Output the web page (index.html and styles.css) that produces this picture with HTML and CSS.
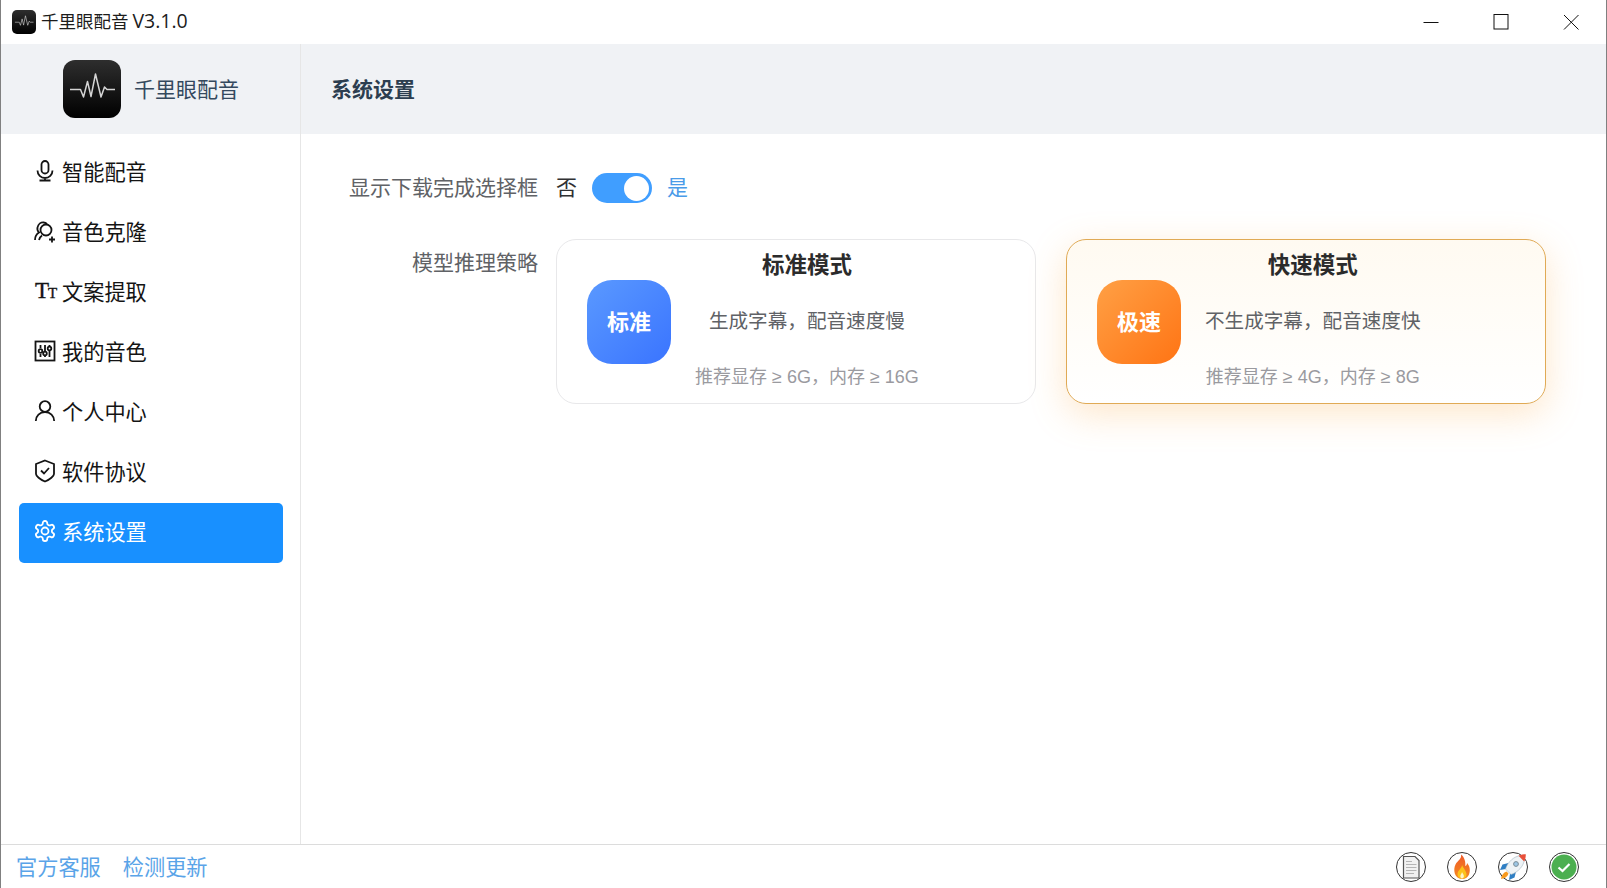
FILE: index.html
```html
<!DOCTYPE html>
<html lang="zh-CN">
<head>
<meta charset="utf-8">
<title>千里眼配音</title>
<link rel="stylesheet" href="styles.css">
</head>
<body>
<svg class="defs" width="0" height="0" aria-hidden="true">
  <defs>
    <linearGradient id="logoBg" x1="0" y1="0" x2="0" y2="1">
      <stop offset="0" stop-color="#2e2e2e"/><stop offset="1" stop-color="#000"/>
    </linearGradient>
    <linearGradient id="fireOut" x1="0" y1="0" x2="0" y2="1">
      <stop offset="0" stop-color="#ee5a2a"/><stop offset="1" stop-color="#f58a1f"/>
    </linearGradient>
    <symbol id="logo" viewBox="0 0 58 58">
      <rect width="58" height="58" rx="12" fill="url(#logoBg)"/>
      <path d="M7 29.500H15L17.500 29.500L20.500 37L24.500 21.500L28 36.500L32.500 14L38 37L41.500 27L44 29.500H52" fill="none" stroke="#d4d4d4" stroke-width="1.500" stroke-linejoin="round"/>
    </symbol>
  </defs>
</svg>
<div class="window">
  <header class="titlebar">
    <svg class="title-logo"><use href="#logo"/></svg>
    <span class="title-text">千里眼配音 <span class="title-ver">V3.1.0</span></span>
    <div class="win-controls">
      <svg class="win-btn" viewBox="0 0 16 16"><path d="M0.500 8.500H15.500" stroke="#111" fill="none"/></svg>
      <svg class="win-btn" viewBox="0 0 16 16"><rect x="1" y="0.500" width="14" height="14.500" fill="none" stroke="#111"/></svg>
      <svg class="win-btn" viewBox="0 0 16 16"><path d="M1 1L15.500 15.500M15.500 1L1 15.500" stroke="#111" fill="none"/></svg>
    </div>
  </header>

  <div class="top">
    <div class="brand">
      <svg class="brand-logo"><use href="#logo"/></svg>
      <span class="brand-name">千里眼配音</span>
    </div>
    <h1 class="page-title">系统设置</h1>
  </div>

  <div class="main">
    <nav class="sidebar">
      <a class="nav-item">
        <svg class="nav-icon" viewBox="0 0 24 24"><rect x="8.500" y="2" width="7" height="12.500" rx="3.500"/><path d="M4.500 11.500a7.500 7.500 0 0 0 15 0M12 19v2.500M6.500 21.500h11"/></svg>
        <span>智能配音</span>
      </a>
      <a class="nav-item">
        <svg class="nav-icon" viewBox="0 0 24 24"><path d="M2 21c0-3.500 1.500-6 4-7.500C4.500 12 4 10.500 4.500 8.500 5.300 5.200 8 3 11 3.500c1.500.2 2.500 1 3 2"/><circle cx="13" cy="11" r="5.500"/><path d="M9 16.500c-1.500 1-2.500 2.500-3 4.500M19 17.500v6M16 20.500h6"/></svg>
        <span>音色克隆</span>
      </a>
      <a class="nav-item">
        <span class="tt-icon"><span class="tt-big">T</span><span class="tt-small">T</span></span>
        <span>文案提取</span>
      </a>
      <a class="nav-item">
        <svg class="nav-icon" viewBox="0 0 24 24"><rect x="2.500" y="2.500" width="19" height="19" stroke-width="1.800"/><path d="M7.500 6v3M7.500 15v3M12 6v6M12 17v1M16.500 6v1M16.500 12v6"/><circle cx="7.500" cy="12" r="1.800"/><circle cx="12" cy="14.500" r="1.800"/><circle cx="16.500" cy="9.500" r="1.800"/></svg>
        <span>我的音色</span>
      </a>
      <a class="nav-item">
        <svg class="nav-icon" viewBox="0 0 24 24"><circle cx="12" cy="7.500" r="5.300"/><path d="M2.800 22c0-5 4-9 9.200-9s9.200 4 9.200 9"/></svg>
        <span>个人中心</span>
      </a>
      <a class="nav-item">
        <svg class="nav-icon" viewBox="0 0 24 24"><path d="M12 1.500L21 5v10c0 2-4 5.500-9 7.500C7 20.500 3 17 3 15V5z"/><path d="M8 11.500l3 3 5-5.500"/></svg>
        <span>软件协议</span>
      </a>
      <a class="nav-item active">
        <svg class="nav-icon" viewBox="0 0 24 24"><path d="M12.220 2h-.44a2 2 0 0 0-2 2v.18a2 2 0 0 1-1 1.730l-.43.25a2 2 0 0 1-2 0l-.15-.08a2 2 0 0 0-2.730.73l-.22.38a2 2 0 0 0 .73 2.730l.15.1a2 2 0 0 1 1 1.720v.51a2 2 0 0 1-1 1.740l-.15.09a2 2 0 0 0-.73 2.730l.22.38a2 2 0 0 0 2.730.73l.15-.08a2 2 0 0 1 2 0l.43.25a2 2 0 0 1 1 1.730V20a2 2 0 0 0 2 2h.44a2 2 0 0 0 2-2v-.18a2 2 0 0 1 1-1.730l.43-.25a2 2 0 0 1 2 0l.15.08a2 2 0 0 0 2.730-.73l.22-.39a2 2 0 0 0-.73-2.730l-.15-.08a2 2 0 0 1-1-1.740v-.5a2 2 0 0 1 1-1.740l.15-.09a2 2 0 0 0 .73-2.730l-.22-.38a2 2 0 0 0-2.730-.73l-.15.08a2 2 0 0 1-2 0l-.43-.25a2 2 0 0 1-1-1.730V4a2 2 0 0 0-2-2z"/><circle cx="12" cy="12" r="3.500"/></svg>
        <span>系统设置</span>
      </a>
    </nav>

    <section class="content">
      <div class="form">
        <div class="label label-switch">显示下载完成选择框</div>
        <div class="switch-row">
          <span class="opt opt-off">否</span>
          <span class="switch"><span class="knob"></span></span>
          <span class="opt opt-on">是</span>
        </div>
        <div class="label label-cards">模型推理策略</div>
        <div class="cards">
          <div class="card">
            <div class="badge badge-blue">标准</div>
            <div class="card-text">
              <div class="card-title">标准模式</div>
              <div class="card-desc">生成字幕，配音速度慢</div>
              <div class="card-sub">推荐显存 ≥ 6G，内存 ≥ 16G</div>
            </div>
          </div>
          <div class="card card-selected">
            <div class="badge badge-orange">极速</div>
            <div class="card-text">
              <div class="card-title">快速模式</div>
              <div class="card-desc">不生成字幕，配音速度快</div>
              <div class="card-sub">推荐显存 ≥ 4G，内存 ≥ 8G</div>
            </div>
          </div>
        </div>
      </div>
    </section>
  </div>

  <footer class="footer">
    <a class="foot-link">官方客服</a>
    <a class="foot-link">检测更新</a>
    <div class="status-icons">
      <svg class="status" viewBox="0 0 30 30">
        <circle cx="15" cy="15" r="14.500" fill="#fff" stroke="#333"/>
        <path d="M7.500 4.500H19L23 8.500V26H7.500z" fill="#f1f1f1" stroke="#555" stroke-width="1.200"/>
        <path d="M10 9.500H16M10 12.500H20.500M10 15.500H20.500M10 18.500H20.500M10 21.500H18" stroke="#b5b5b5" stroke-width="1"/>
      </svg>
      <svg class="status" viewBox="0 0 30 30">
        <circle cx="15" cy="15" r="14.500" fill="#fff" stroke="#333"/>
        <path d="M14 2.500C15 7 10.500 8.500 8.500 12.500C6 17 7 27 15 27C22.500 27 24 19 22 14C21.300 12.500 20.500 11.500 20 11C20 13 19 14 18.300 14C18.800 10 17.500 5 14 2.500z" fill="url(#fireOut)"/>
        <path d="M15 13C15 16.500 10.500 18 10.500 22.500C10.500 25 12.700 26.500 15 26.500C17.800 26.500 19.500 25 19.500 22.500C19.500 19 16.500 16.500 15 13z" fill="#fcc21b"/>
        <path d="M15 20C15 21.500 13.300 22.500 13.300 24.300C13.300 25.500 14.100 26.500 15 26.500C16 26.500 16.900 25.500 16.900 24.300C16.900 22.500 15.500 21.500 15 20z" fill="#fff3c4"/>
      </svg>
      <svg class="status" viewBox="0 0 30 30">
        <circle cx="15" cy="15" r="14.500" fill="#fff" stroke="#333"/>
        <path d="M10.500 11L4.500 12.500L2 18L8 17z" fill="#2f7fc4"/>
        <path d="M18 19.500L16.500 25.500L11 28L12 22z" fill="#2f7fc4"/>
        <path d="M8.500 19.500C5.500 20.500 3.500 23 3 27C7 26.500 9.800 24.500 10.500 21.500z" fill="#f79a1f"/>
        <path d="M7.500 17C10 9.500 16 4.500 22.500 3.500L26.500 7.500C25.500 14 20.500 20 13 22.500z" fill="#eef3f6" stroke="#9fb4c0" stroke-width=".6"/>
        <path d="M20.500 3.800C23 2.500 25.500 2.200 27.800 2.200C27.800 4.500 27.500 7 26.200 9.500z" fill="#e8503a"/>
        <circle cx="18" cy="12" r="2.400" fill="#9cc7e6" stroke="#7a8c96"/>
      </svg>
      <svg class="status" viewBox="0 0 30 30">
        <circle cx="15" cy="15" r="14.500" fill="#fff" stroke="#333"/>
        <circle cx="15" cy="15" r="12.500" fill="#4caf50"/>
        <path d="M9.500 15.500L13.500 19L20.500 12" fill="none" stroke="#fff" stroke-width="2.200"/>
      </svg>
    </div>
  </footer>
</div>
</body>
</html>
```

FILE: styles.css
```css
* { box-sizing: border-box; }
html, body { margin: 0; height: 100%; }
body {
  font-family: "Noto Sans CJK SC", "Liberation Sans", sans-serif;
  background: #fff;
  color: #1a1a1a;
  overflow: hidden;
}
.defs { position: absolute; }
.window {
  height: 100vh;
  display: flex;
  flex-direction: column;
  border-left: 1px solid #808080;
  border-right: 1px solid #808080;
}

/* title bar */
.titlebar {
  height: 44px;
  flex: none;
  display: flex;
  align-items: center;
  padding-left: 11px;
}
.title-logo { width: 24px; height: 24px; margin-right: 5px; }
.title-text { font-size: 17.500px; color: #1c1c1c; line-height: 1; margin-bottom: 2px; }
.title-ver { font-family: "Open Sans", sans-serif; font-size: 19.500px; }
.win-controls {
  margin-left: auto;
  display: flex;
  gap: 54px;
  padding-right: 27px;
}
.win-btn { width: 16px; height: 16px; display: block; }

/* header band */
.top {
  height: 90px;
  flex: none;
  display: flex;
  background: #f0f2f5;
}
.brand {
  width: 300px;
  flex: none;
  display: flex;
  align-items: center;
  padding-left: 62px;
  border-right: 1px solid #e6e6e6;
}
.brand-logo { width: 58px; height: 58px; margin-right: 13px; }
.brand-name { font-size: 21px; color: #34495e; margin-bottom: 2px; }
.page-title {
  margin: 0 0 2px 30px;
  align-self: center;
  font-size: 21px;
  font-weight: 700;
  color: #2c3e50;
}

/* main */
.main { flex: 1; display: flex; min-height: 0; }
.sidebar {
  width: 300px;
  flex: none;
  padding: 9px 17px 0 18px;
  border-right: 1px solid #e6e6e6;
}
.nav-item {
  height: 60px;
  display: flex;
  align-items: center;
  gap: 5px;
  padding: 0 0 5px 14px;
  font-size: 21.200px;
  color: #141414;
  border-radius: 5px;
}
.nav-item.active { background: #1890ff; color: #fff; }
.nav-icon {
  width: 24px;
  height: 24px;
  flex: none;
  fill: none;
  stroke: currentColor;
  stroke-width: 1.800;
}
.tt-icon {
  width: 24px;
  flex: none;
  padding-left: 2px;
  font-family: "Liberation Serif", serif;
  font-weight: 400;
  -webkit-text-stroke: 0.400px currentColor;
  white-space: nowrap;
  line-height: 1;
  letter-spacing: -1px;
}
.tt-big { font-size: 23px; }
.tt-small { font-size: 15px; }

/* content */
.content { flex: 1; padding: 39px 60px 0 0; }
.form {
  display: grid;
  grid-template-columns: 237px 1fr;
  column-gap: 18px;
  row-gap: 36px;
}
.label {
  text-align: right;
  font-size: 21px;
  color: #606266;
}
.label-switch { line-height: 26px; }
.label-cards { line-height: 44px; }
.switch-row {
  display: flex;
  align-items: center;
  font-size: 21px;
  line-height: 26px;
}
.opt { margin-bottom: 4px; }
.opt-off { color: #303133; }
.opt-on { color: #4a9be8; }
.switch {
  width: 60px;
  height: 30px;
  margin: 0 15px;
  border-radius: 15px;
  background: #409eff;
  display: flex;
  align-items: center;
  justify-content: flex-end;
  padding-right: 3px;
}
.knob { width: 25px; height: 25px; border-radius: 50%; background: #fff; }

.cards { display: flex; gap: 30px; }
.card {
  width: 480px;
  height: 165px;
  display: flex;
  align-items: center;
  padding: 0 30px;
  background: #fff;
  border: 1px solid #e8e8ea;
  border-radius: 20px;
}
.card-selected {
  border-color: #e0aa55;
  background: linear-gradient(180deg, #fffaf1 0%, #fff 100%);
  box-shadow: 0 10px 36px rgba(250, 170, 70, 0.28);
}
.badge {
  width: 84px;
  height: 84px;
  flex: none;
  border-radius: 25px;
  display: flex;
  align-items: center;
  justify-content: center;
  padding-bottom: 3px;
  color: #fff;
  font-size: 22px;
  font-weight: 700;
}
.badge-blue { background: linear-gradient(135deg, #5a99ff, #3a74ff); }
.badge-orange { background: linear-gradient(135deg, #ffa045, #ff7414); }
.card-text {
  margin-left: 24px;
  height: 100%;
  padding: 5px 0 11px;
  display: flex;
  flex-direction: column;
  align-items: center;
  justify-content: space-between;
}
.card-title { font-size: 22.500px; font-weight: 700; color: #2b2b2b; line-height: 36px; }
.card-desc { font-size: 19.600px; color: #606266; line-height: 30px; margin-bottom: 4px; }
.card-sub { font-family: "Liberation Sans", "Noto Sans CJK SC", sans-serif; font-size: 18px; color: #9a9a9f; line-height: 30px; }

/* footer */
.footer {
  height: 44px;
  flex: none;
  display: flex;
  align-items: center;
  gap: 22px;
  padding: 0 27px 0 15px;
  border-top: 1px solid #dcdcdc;
}
.foot-link { font-size: 21.200px; color: #5aa4e8; margin-bottom: 2px; }
.status-icons { margin-left: auto; display: flex; gap: 21px; }
.status { width: 30px; height: 30px; display: block; }
```
